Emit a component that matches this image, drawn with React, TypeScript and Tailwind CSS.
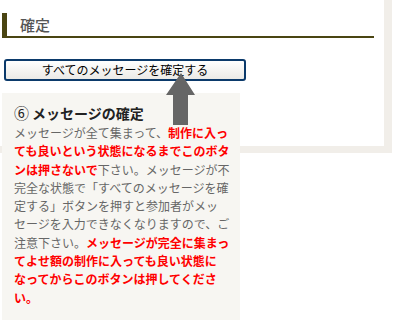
const lines: { text: string; red?: boolean }[][] = [
  [{ text: "メッセージが全て集まって、" }, { text: "制作に入っ", red: true }],
  [{ text: "ても良いという状態になるまでこのボタ", red: true }],
  [{ text: "ンは押さないで", red: true }, { text: "下さい。メッセージが不" }],
  [{ text: "完全な状態で「すべてのメッセージを確" }],
  [{ text: "定する」ボタンを押すと参加者がメッ" }],
  [{ text: "セージを入力できなくなりますので、ご" }],
  [{ text: "注意下さい。" }, { text: "メッセージが完全に集まっ", red: true }],
  [{ text: "てよせ額の制作に入っても良い状態に", red: true }],
  [{ text: "なってからこのボタンは押してくださ", red: true }],
  [{ text: "い。", red: true }],
];

export default function App() {
  return (
    <div
      className="relative h-[329px] w-[398px] overflow-hidden bg-white"
      style={{ fontFamily: '"Noto Sans CJK JP", "Noto Sans", sans-serif' }}
    >
      {/* Main panel with beige frame */}
      <div className="h-[153px] w-[392px] border-r-8 border-b-[7px] border-[#f1eee9] bg-white pt-[13px]">
        <div className="ml-[2px] mr-[10px] flex h-[25px] items-center border-b-2 border-l-[5px] border-[#4a4512] pl-[13px]">
          <span className="text-[15px] font-medium leading-none text-[#555]">確定</span>
        </div>
        <button className="ml-[4px] mt-[21px] flex h-[22px] w-[242px] items-center justify-center rounded-[3px] border-2 border-[#0b3a6b] bg-gradient-to-b from-white to-[#ebeae6] text-[12px] leading-none text-black">
          すべてのメッセージを確定する
        </button>
      </div>

      {/* Callout */}
      <div className="absolute left-[2px] top-[93px] h-[227px] w-[238px] bg-[#f7f6f2] pl-[12px] pr-[6px] pt-[10px]">
        <div className="mb-[1px] flex h-[20px] items-center text-[14px] font-bold text-[#222]">
          <span className="mr-[3px] text-[15px] font-normal">⑥</span>
          メッセージの確定
        </div>
        {lines.map((line, i) => (
          <div key={i} className="h-[18.3px] whitespace-nowrap text-[12px] leading-[18.3px] text-[#666]">
            {line.map((seg, j) =>
              seg.red ? (
                <b key={j} className="font-bold text-[#ff0000]">
                  {seg.text}
                </b>
              ) : (
                <span key={j}>{seg.text}</span>
              )
            )}
          </div>
        ))}
      </div>

      {/* Arrow */}
      <svg className="absolute left-[165px] top-[73px]" width="32" height="52" viewBox="0 0 32 52">
        <polygon points="16,0 30,22 23,22 23,52 8,52 8,22 1,22" fill="#666" />
      </svg>
    </div>
  );
}
